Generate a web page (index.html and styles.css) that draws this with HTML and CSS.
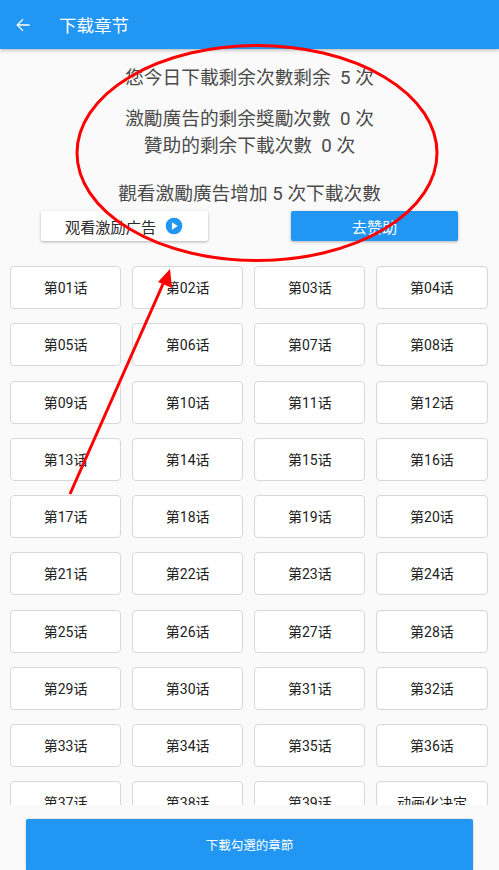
FILE: index.html
```html
<!DOCTYPE html>
<html lang="zh">
<head>
<meta charset="utf-8">
<title>下载章节</title>
<link rel="stylesheet" href="styles.css">
</head>
<body>
<div class="page">
  <header class="appbar">
    <svg class="back" viewBox="0 0 24 24" width="20" height="20"><path d="M20 11.2H6.9l5.6-5.6-1-1L4 12l7.5 7.4 1-1-5.6-5.6H20z" fill="#fff"/></svg>
    <h1 class="title">下载章节</h1>
  </header>
  <section class="info">
    <p class="line first">您今日下載剩余次數剩余&nbsp; 5 次</p>
    <p class="line second">激勵廣告的剩余獎勵次數&nbsp; 0 次</p>
    <p class="line">贊助的剩余下載次數&nbsp; 0 次</p>
    <p class="line fourth">觀看激勵廣告增加 5 次下載次數</p>
  </section>
  <section class="actions">
    <button class="btn btn-white">观看激励广告<svg class="play" viewBox="0 0 24 24" width="20" height="20"><circle cx="12" cy="12" r="10" fill="#2196f3"/><path d="M9.5 7.5v9l7-4.5z" fill="#fff"/></svg></button>
    <button class="btn btn-blue">去赞助</button>
  </section>
  <main class="scroll">
    <div class="grid">
      <div class="cell">第01话</div><div class="cell">第02话</div><div class="cell">第03话</div><div class="cell">第04话</div>
      <div class="cell">第05话</div><div class="cell">第06话</div><div class="cell">第07话</div><div class="cell">第08话</div>
      <div class="cell">第09话</div><div class="cell">第10话</div><div class="cell">第11话</div><div class="cell">第12话</div>
      <div class="cell">第13话</div><div class="cell">第14话</div><div class="cell">第15话</div><div class="cell">第16话</div>
      <div class="cell">第17话</div><div class="cell">第18话</div><div class="cell">第19话</div><div class="cell">第20话</div>
      <div class="cell">第21话</div><div class="cell">第22话</div><div class="cell">第23话</div><div class="cell">第24话</div>
      <div class="cell">第25话</div><div class="cell">第26话</div><div class="cell">第27话</div><div class="cell">第28话</div>
      <div class="cell">第29话</div><div class="cell">第30话</div><div class="cell">第31话</div><div class="cell">第32话</div>
      <div class="cell">第33话</div><div class="cell">第34话</div><div class="cell">第35话</div><div class="cell">第36话</div>
      <div class="cell">第37话</div><div class="cell">第38话</div><div class="cell">第39话</div><div class="cell">动画化决定</div>
    </div>
  </main>
  <footer class="footer">
    <button class="download">下載勾選的章節</button>
  </footer>
  <svg class="markup" viewBox="0 0 499 870" width="499" height="870">
    <ellipse cx="257" cy="153" rx="180" ry="107.5" fill="none" stroke="#f00" stroke-width="3"/>
    <path d="M70 494L163 284" fill="none" stroke="#f00" stroke-width="3"/>
    <path d="M170 269L158 282L172 288z" fill="#f00"/>
  </svg>
</div>
</body>
</html>
```
FILE: styles.css
```css
* { box-sizing: border-box; }
html, body { margin: 0; padding: 0; }
body {
  background: #fafafa;
  font-family: Roboto, "Noto Sans CJK SC", sans-serif;
  color: #333;
}
.page {
  position: relative;
  width: 499px;
  height: 870px;
  overflow: hidden;
  display: flex;
  flex-direction: column;
  background: #fafafa;
}
.appbar {
  flex: none;
  height: 49px;
  background: #2196f3;
  display: flex;
  align-items: center;
  padding-left: 13px;
  box-shadow: 0 1px 4px rgba(0, 0, 0, .3);
  position: relative;
  z-index: 1;
}
.back { flex: none; }
.title {
  margin: 0 0 0 26px;
  font-size: 17.5px;
  font-weight: 400;
  color: #fff;
}
.info {
  flex: none;
  padding-top: 16px;
  text-align: center;
}
.line {
  margin: 0;
  font-size: 18.7px;
  line-height: 27px;
  color: #4a4a4a;
}
.second { margin-top: 14px; }
.fourth { margin-top: 21px; }
.actions {
  flex: none;
  display: flex;
  justify-content: center;
  gap: 83px;
  margin-top: 3px;
}
.btn {
  width: 167px;
  height: 30px;
  border: 0;
  border-radius: 2px;
  font: inherit;
  font-size: 15.2px;
  display: flex;
  align-items: center;
  justify-content: center;
  padding: 0;
  box-shadow: 0 1px 3px rgba(0, 0, 0, .3);
}
.btn-white { background: #fff; color: #2a2a2a; }
.btn-blue { background: #2196f3; color: #fff; }
.play { margin-left: 8px; }
.scroll {
  flex: 1;
  min-height: 0;
  overflow: hidden;
  margin-top: 25px;
}
.grid {
  display: grid;
  grid-template-columns: repeat(4, 1fr);
  column-gap: 11px;
  row-gap: 14.25px;
  padding: 0 11.5px 0 10px;
}
.cell {
  height: 43px;
  background: #fff;
  border: 1px solid #d8d8d8;
  border-radius: 4px;
  display: flex;
  align-items: center;
  justify-content: center;
  padding-bottom: 1px;
  font-size: 14px;
  color: #222;
}
.footer {
  flex: none;
  height: 65px;
  padding: 14px 26px 0;
  background: #fafafa;
}
.download {
  display: block;
  width: 447px;
  height: 51px;
  border: 0;
  border-radius: 2px 2px 0 0;
  background: #2196f3;
  color: #fff;
  font: inherit;
  font-size: 12.5px;
  box-shadow: 0 0 2px rgba(0, 0, 0, .25);
}
.markup {
  position: absolute;
  left: 0;
  top: 0;
  z-index: 2;
  pointer-events: none;
}
```
